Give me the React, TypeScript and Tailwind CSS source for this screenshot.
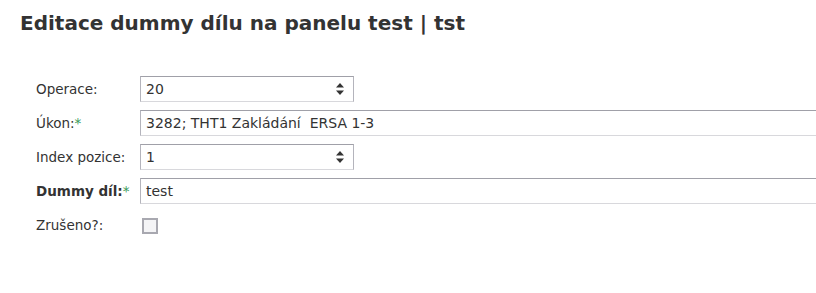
import React from "react";

function Spinner() {
  return (
    <svg width="10" height="16" viewBox="0 0 10 16" className="shrink-0">
      <path d="M1 6.5 L5 2 L9 6.5 Z" fill="#333" />
      <path d="M1 9.5 L5 14 L9 9.5 Z" fill="#333" />
    </svg>
  );
}

function Field({ value, spin, wide }: { value: string; spin?: boolean; wide?: boolean }) {
  return (
    <div
      className={`h-[26px] shrink-0 flex items-center border border-[#b4b4bc] border-t-[#a0a0a8] border-b-[#d8d8dc] bg-white pl-[5px] pr-[8px] ${
        wide ? "w-[720px]" : "w-[214px]"
      }`}
    >
      <span className="flex-1 text-[14px] text-[#333] whitespace-pre">{value}</span>
      {spin && <Spinner />}
    </div>
  );
}

function Row({ label, children, bold, req }: { label: string; children: React.ReactNode; bold?: boolean; req?: boolean }) {
  return (
    <div className="flex items-center h-[26px]">
      <div className={`w-[104px] shrink-0 text-[13.5px] text-[#333] ${bold ? "font-bold" : ""}`}>
        {label}
        {req && <span className="text-[#3a9a5a] font-normal">*</span>}
      </div>
      {children}
    </div>
  );
}

export default function App() {
  return (
    <div className="w-[816px] h-[293px] bg-white overflow-hidden" style={{ fontFamily: '"DejaVu Sans", Verdana, sans-serif' }}>
      <h1 className="pl-[20px] pt-[10px] text-[20px] font-bold text-[#333] leading-[26px]">
        Editace dummy dílu na panelu test | tst
      </h1>
      <div className="pl-[36px] pt-[40px] flex flex-col gap-[8px]">
        <Row label="Operace:">
          <Field value="20" spin />
        </Row>
        <Row label="Úkon:" req>
          <Field value="3282; THT1 Zakládání  ERSA 1-3" wide />
        </Row>
        <Row label="Index pozice:">
          <Field value="1" spin />
        </Row>
        <Row label="Dummy díl:" bold req>
          <Field value="test" wide />
        </Row>
        <Row label="Zrušeno?:">
          <div className="w-[16px] h-[16px] ml-[2px] mt-[2px] border-2 border-[#a8a8b0] bg-[#f4f4f6]" />
        </Row>
      </div>
    </div>
  );
}
